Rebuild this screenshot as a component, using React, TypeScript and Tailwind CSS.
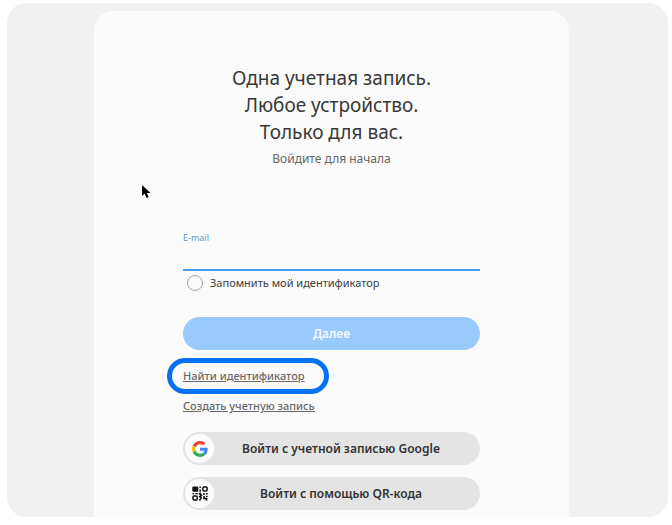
import React, { useState } from 'react';

function GoogleIcon() {
  return (
    <svg viewBox="0 0 48 48" className="size-4" aria-hidden="true">
      <path fill="#EA4335" d="M24 9.5c3.54 0 6.71 1.22 9.21 3.6l6.85-6.85C35.9 2.38 30.47 0 24 0 14.62 0 6.51 5.38 2.56 13.22l7.98 6.19C12.43 13.72 17.74 9.5 24 9.5z" />
      <path fill="#4285F4" d="M46.98 24.55c0-1.57-.15-3.09-.38-4.55H24v9.02h12.94c-.58 2.96-2.26 5.48-4.78 7.18l7.73 6c4.51-4.18 7.09-10.36 7.09-17.65z" />
      <path fill="#FBBC05" d="M10.53 28.59c-.48-1.45-.76-2.99-.76-4.59s.27-3.14.76-4.59l-7.98-6.19C.92 16.46 0 20.12 0 24c0 3.88.92 7.54 2.56 10.78l7.97-6.19z" />
      <path fill="#34A853" d="M24 48c6.48 0 11.93-2.13 15.89-5.81l-7.73-6c-2.15 1.45-4.92 2.3-8.16 2.3-6.26 0-11.57-4.22-13.47-9.91l-7.98 6.19C6.51 42.62 14.62 48 24 48z" />
    </svg>
  );
}

function QrIcon() {
  return (
    <svg viewBox="0 0 16 15" className="h-[15px] w-4" fill="#111" aria-hidden="true">
      <rect x="0.3" y="0.5" width="6" height="5.2" rx="1.2" />
      <rect x="10.9" y="1.1" width="4.2" height="4" rx="1" fill="none" stroke="#111" strokeWidth="1.5" />
      <rect x="1" y="9.9" width="4.2" height="4" rx="1" fill="none" stroke="#111" strokeWidth="1.5" />
      <path d="M7.4 0.5h1.5v1.5H7.4zM7.4 3.5h1.5v2.2H7.4zM0.5 7h1.5v1.2H0.5zM3.4 7h2.3v1.2H3.4zM6.4 7.4l1.9-1.2 2.2 3.4-1.5 1.3zM11 7.2h2v1.6h-2zM14 7h1.6v1.6H14zM6.6 10.6l1.8-1.2 2 2.8-1.5 1zM7 13h2v1.5H7zM11.2 10l1.6 0v1.8h2.7v1.4h-4.3zM13.9 9.8h1.6v1.2h-1.6zM13.4 13.4h2.1v1.1h-2.1z" />
    </svg>
  );
}

interface SocialButtonProps {
  icon: React.ReactNode;
  label: string;
}

function SocialButton({ icon, label }: SocialButtonProps) {
  return (
    <button
      type="button"
      className="flex h-[33px] w-full items-center rounded-full bg-[#e4e4e4] px-0.5 text-xs font-semibold text-[#333]"
    >
      <span className="flex size-[29px] shrink-0 items-center justify-center rounded-full bg-[#fbfbfb]">
        {icon}
      </span>
      <span className="flex-1 pr-2.5 text-center">{label}</span>
    </button>
  );
}

function Cursor() {
  return (
    <svg viewBox="0 0 9 14" className="absolute top-[174px] left-12 h-3.5 w-[9px]" aria-hidden="true">
      <path d="M0 0v11l2.6-2.4L4.5 13l2.2-1-1.9-4.1H8.5z" fill="#000" />
    </svg>
  );
}

export default function App() {
  const [email, setEmail] = useState('');
  const [remember, setRemember] = useState(false);

  return (
    <div className="bg-white pt-[3px] pr-1 pb-2 pl-[7px] font-['Noto_Sans',sans-serif]">
      <div className="overflow-hidden rounded-[20px] bg-[#f1f1f1] pt-2 pr-[99px] pl-[87px]">
        <main className="relative rounded-t-[20px] bg-[#fbfbfb] px-[89px] pt-[54px] pb-[7px]">
          <Cursor />

          <h1 className="text-center text-[19px] leading-[27px] whitespace-nowrap text-[#383838]">
            Одна учетная запись.
            <br />
            Любое устройство.
            <br />
            Только для вас.
          </h1>
          <p className="mt-[3px] text-center text-xs leading-5 text-[#666]">Войдите для начала</p>

          <form onSubmit={(e) => e.preventDefault()}>
            <label htmlFor="email" className="mt-[63px] block text-[9px] leading-3 text-[#5a9bd0]">
              E-mail
            </label>
            <input
              id="email"
              type="email"
              value={email}
              onChange={(e) => setEmail(e.target.value)}
              className="block h-[27px] w-full border-b-2 border-[#4a9de8] bg-transparent text-xs outline-none"
            />

            <label className="mt-1 flex h-4 items-center gap-[7px] pl-1 text-[11px] text-[#404040]">
              <input
                type="checkbox"
                checked={remember}
                onChange={(e) => setRemember(e.target.checked)}
                className="size-4 appearance-none rounded-full border border-[#a8a8a8] checked:bg-[#4a9de8]"
              />
              Запомнить мой идентификатор
            </label>

            <button
              type="submit"
              className="mt-[26px] h-[33px] w-full rounded-full bg-[#9acafc] text-xs font-semibold text-[#f4f9ff]"
            >
              Далее
            </button>
          </form>

          <div className="mt-4 flex flex-col items-start gap-[10px] text-[11px] leading-5 font-medium text-[#686868] underline">
            <div className="relative">
              <a href="#find-id">Найти идентификатор</a>
              <span className="pointer-events-none absolute -inset-y-2 -right-6 -left-4 rounded-full border-[5px] border-[#0672f2]" />
            </div>
            <a href="#sign-up">Создать учетную запись</a>
          </div>

          <div className="mt-4 flex flex-col gap-3">
            <SocialButton icon={<GoogleIcon />} label="Войти с учетной записью Google" />
            <SocialButton icon={<QrIcon />} label="Войти с помощью QR-кода" />
          </div>
        </main>
      </div>
    </div>
  );
}
